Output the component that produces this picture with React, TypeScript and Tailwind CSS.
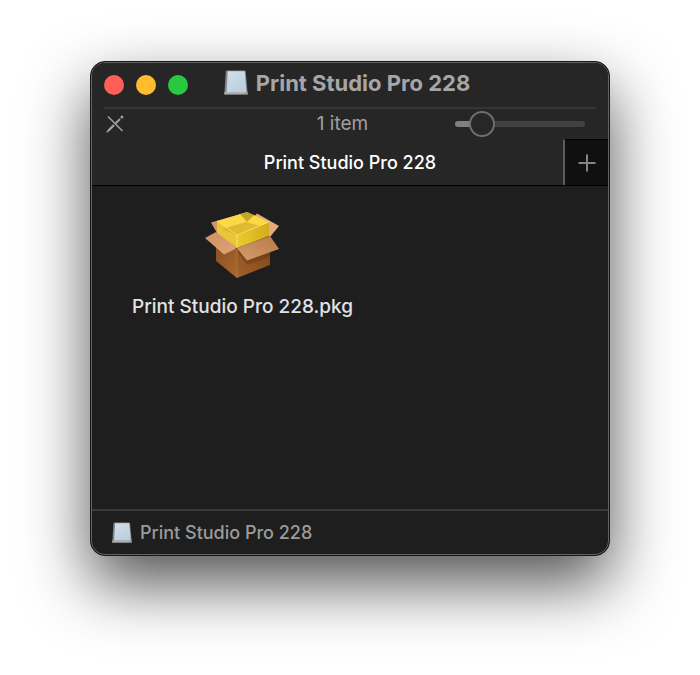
import React, { useState } from 'react';

const VOLUME_NAME = 'Print Studio Pro 228';

const DriveIcon: React.FC<{ className?: string }> = ({ className }) => (
  <svg className={className} viewBox="0 0 24 26" aria-hidden="true">
    <defs>
      <linearGradient id="drive-face" x1="0" y1="0" x2="0.6" y2="1">
        <stop offset="0" stopColor="#d5dfe8" />
        <stop offset="1" stopColor="#b9d0df" />
      </linearGradient>
    </defs>
    <path d="M1.8 1.500Q2 0.500 3 0.500H20.500Q21.500 0.500 21.700 1.500L23.500 22V24Q23.500 25 22.500 25H1.500Q0.500 25 0.500 24V22Z" fill="#85888b" />
    <path d="M3.800 1.300H20.700L22.500 22H2.600Z" fill="url(#drive-face)" />
    <path d="M0.500 22H23.500V24Q23.500 25 22.500 25H1.500Q0.500 25 0.500 24Z" fill="#b0b2b2" />
    <path d="M1 24.500H23" stroke="#747675" strokeWidth="1" />
    <circle cx="21.8" cy="23.2" r="0.8" fill="#3fae4b" />
  </svg>
);

const PackageIcon: React.FC<{ className?: string }> = ({ className }) => (
  <svg className={className} viewBox="0 0 76 68" aria-hidden="true">
    <defs>
      <linearGradient id="box-left" x1="0" y1="0" x2="1" y2="1">
        <stop offset="0" stopColor="#8d4f22" />
        <stop offset="1" stopColor="#a9682f" />
      </linearGradient>
      <linearGradient id="box-right" x1="0" y1="1" x2="1" y2="0">
        <stop offset="0" stopColor="#a2622b" />
        <stop offset="1" stopColor="#7d431a" />
      </linearGradient>
      <linearGradient id="flap-left" x1="0" y1="0" x2="1" y2="1">
        <stop offset="0" stopColor="#cf8f62" />
        <stop offset="1" stopColor="#dfa579" />
      </linearGradient>
      <linearGradient id="flap-right" x1="0" y1="1" x2="1" y2="0">
        <stop offset="0" stopColor="#d39c6c" />
        <stop offset="1" stopColor="#b97a48" />
      </linearGradient>
      <linearGradient id="glow-right" x1="0" y1="0" x2="1" y2="0">
        <stop offset="0" stopColor="#ebca31" />
        <stop offset="1" stopColor="#d5ad19" />
      </linearGradient>
    </defs>
    {/* back flaps */}
    <path d="M7 11.5L41 2L50 12L13 22Z" fill="#d29366" />
    <path d="M53 2.5L75 15L66 26L44 12Z" fill="#e6aa7e" />
    {/* box sides */}
    <path d="M12 34L33 38V67L12 50Z" fill="url(#box-left)" />
    <path d="M33 38L66 30V54L33 67Z" fill="url(#box-right)" />
    <path d="M33 38V67" stroke="#bb7a3c" strokeWidth="0.7" />
    <path d="M33 40L43 54L66 46V42Z" fill="#663512" opacity="0.45" />
    {/* glowing contents */}
    <path d="M13 10L43 1L65 11L33 24Z" fill="#fbd945" />
    <path d="M13 10L33 24V37L13 23Z" fill="#e8c637" />
    <path d="M33 24L65 11V25L33 37Z" fill="url(#glow-right)" />
    <path d="M18 18L42 11L57 15L33 24Z" fill="#cfaa2a" opacity="0.65" />
    <path d="M36 3L43 1L50 4L43 11Z" fill="#a58b18" opacity="0.65" />
    <path d="M13 10L33 24L65 11M33 24V37" fill="none" stroke="#ffe66b" strokeWidth="0.9" />
    {/* front flaps */}
    <path d="M1 27L12 21L33 37L20 43.500Z" fill="url(#flap-left)" />
    <path d="M33 37L66 25L75 38L43 49.500Z" fill="url(#flap-right)" />
  </svg>
);

const NoEditIcon: React.FC<{ className?: string }> = ({ className }) => (
  <svg className={className} viewBox="0 0 18 18" fill="none" stroke="currentColor" aria-hidden="true">
    <path d="M2 1.500L16.500 16" strokeWidth="1.5" />
    <path d="M2.500 15.500L8 10" strokeWidth="2.400" />
    <path d="M0.800 17.200L3 15" strokeWidth="1.600" />
    <path d="M9.500 8.500L14 4" strokeWidth="2" />
    <path d="M15 3L16.800 1.200" strokeWidth="2.600" />
  </svg>
);

const SizeSlider: React.FC = () => {
  const [size, setSize] = useState(13);
  const fill = 10 + size * 0.8;

  return (
    <input
      type="range"
      aria-label="Icon size"
      min={0}
      max={100}
      value={size}
      onChange={(e) => setSize(Number(e.target.value))}
      className="h-1.5 w-[130px] appearance-none rounded-full [&::-webkit-slider-thumb]:size-[26px] [&::-webkit-slider-thumb]:appearance-none [&::-webkit-slider-thumb]:rounded-full [&::-webkit-slider-thumb]:border-2 [&::-webkit-slider-thumb]:border-[#6e6e6e] [&::-webkit-slider-thumb]:bg-[#272727]"
      style={{ backgroundImage: `linear-gradient(to right, #808080 ${fill}%, #414141 ${fill}%)` }}
    />
  );
};

const App: React.FC = () => {
  return (
    <main className="flex min-h-screen bg-white px-[90px] pt-[61px] pb-[119px] font-['Inter','Liberation_Sans',sans-serif]">
      <section className="flex min-w-0 flex-1 overflow-hidden rounded-[15px] border border-[#161616] bg-[#1e1e1e] shadow-[0_28px_64px_rgba(0,0,0,0.68)]">
        <div className="flex min-w-0 flex-1 flex-col overflow-hidden rounded-[14px] border border-[#636363]">
          <header className="bg-[#262626]">
            <div className="mx-3 grid h-[46px] grid-cols-[1fr_auto_1fr] items-center border-b-2 border-[#353535]">
              <div className="flex gap-3">
                <button type="button" aria-label="Close" className="size-5 rounded-full bg-[#ff5f57]" />
                <button type="button" aria-label="Minimize" className="size-5 rounded-full bg-[#febc2e]" />
                <button type="button" aria-label="Zoom" className="size-5 rounded-full bg-[#28c840]" />
              </div>
              <h1 className="flex items-center gap-2 pr-1.5 pb-1 text-[22px] leading-6 font-bold whitespace-nowrap text-[#a6a6a6]">
                <DriveIcon className="h-[26px] w-6" />
                {VOLUME_NAME}
              </h1>
            </div>

            <div className="grid h-[30px] grid-cols-[1fr_auto_1fr] items-center pr-[23px] pl-3.5 text-[19px] text-[#a0a0a0]">
              <NoEditIcon className="size-[18px]" />
              <p className="pr-1.5">1 item</p>
              <div className="flex justify-end">
                <SizeSlider />
              </div>
            </div>

            <div className="flex h-[47px] border-b border-black">
              <button type="button" className="min-w-0 flex-1 truncate pt-0.5 pl-[45px] text-lg font-medium text-white">
                {VOLUME_NAME}
              </button>
              <button
                type="button"
                aria-label="New tab"
                className="flex w-[45px] items-center justify-center border-t border-l-2 border-t-black border-l-[#5c5c5c] bg-[#101010] text-[#858585]"
              >
                <svg className="size-[18px]" viewBox="0 0 18 18" stroke="currentColor" strokeWidth="2" aria-hidden="true">
                  <path d="M9 0.500V17.500M0.500 9H17.500" />
                </svg>
              </button>
            </div>
          </header>

          <div className="flex-1 px-10 pt-[25px]">
            <figure className="flex w-fit flex-col items-center gap-3.5">
              <PackageIcon className="h-[68px] w-[76px]" />
              <figcaption className="text-[19px] leading-7 font-medium whitespace-nowrap text-[#e2e2e2]">
                {VOLUME_NAME}.pkg
              </figcaption>
            </figure>
          </div>

          <footer className="flex h-[45px] items-center gap-2 border-t-2 border-[#3a3a3a] px-5 text-lg font-medium text-[#9b9b9b]">
            <DriveIcon className="h-[22px] w-5" />
            {VOLUME_NAME}
          </footer>
        </div>
      </section>
    </main>
  );
};

export default App;
